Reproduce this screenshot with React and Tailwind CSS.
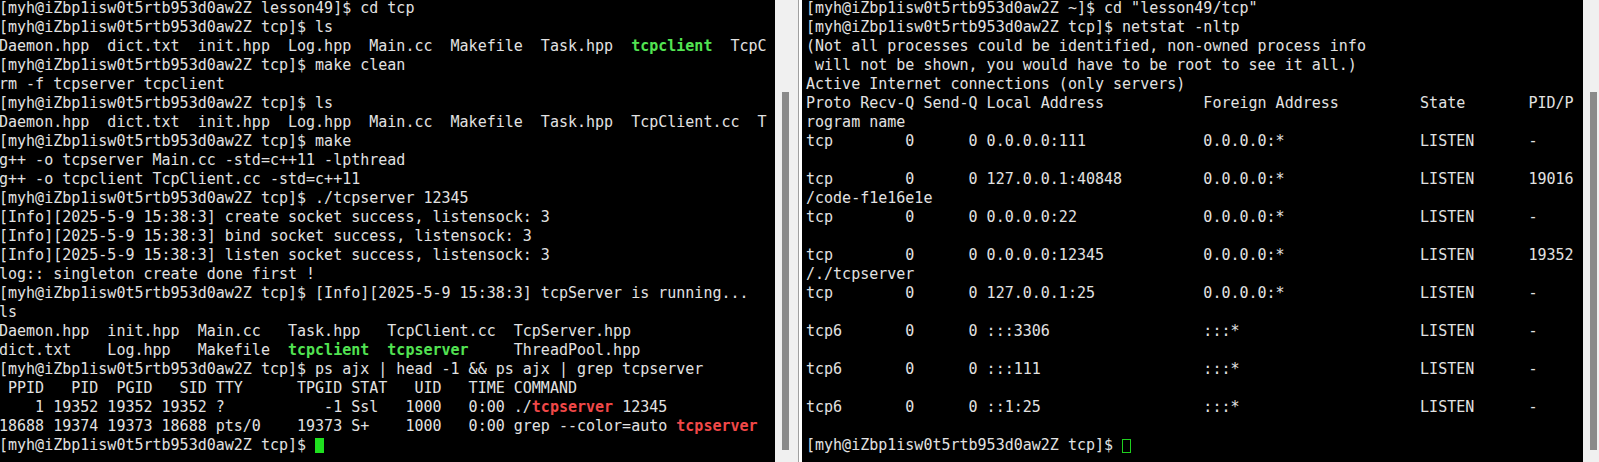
const PROMPT = '[myh@iZbp1isw0t5rtb953d0aw2Z tcp]$ ';

function G({ children }) {
  return <span className="font-bold text-[#52e352]">{children}</span>;
}

function R({ children }) {
  return <span className="font-bold text-[#f04848]">{children}</span>;
}

const leftLines = [
  '[myh@iZbp1isw0t5rtb953d0aw2Z lesson49]$ cd tcp',
  PROMPT + 'ls',
  <>Daemon.hpp  dict.txt  init.hpp  Log.hpp  Main.cc  Makefile  Task.hpp  <G>tcpclient</G>  TcpC</>,
  PROMPT + 'make clean',
  'rm -f tcpserver tcpclient',
  PROMPT + 'ls',
  'Daemon.hpp  dict.txt  init.hpp  Log.hpp  Main.cc  Makefile  Task.hpp  TcpClient.cc  T',
  PROMPT + 'make',
  'g++ -o tcpserver Main.cc -std=c++11 -lpthread',
  'g++ -o tcpclient TcpClient.cc -std=c++11',
  PROMPT + './tcpserver 12345',
  '[Info][2025-5-9 15:38:3] create socket success, listensock: 3',
  '[Info][2025-5-9 15:38:3] bind socket success, listensock: 3',
  '[Info][2025-5-9 15:38:3] listen socket success, listensock: 3',
  'log:: singleton create done first !',
  PROMPT + '[Info][2025-5-9 15:38:3] tcpServer is running...',
  'ls',
  'Daemon.hpp  init.hpp  Main.cc   Task.hpp   TcpClient.cc  TcpServer.hpp',
  <>dict.txt    Log.hpp   Makefile  <G>tcpclient</G>  <G>tcpserver</G>     ThreadPool.hpp</>,
  PROMPT + 'ps ajx | head -1 && ps ajx | grep tcpserver',
  ' PPID   PID  PGID   SID TTY      TPGID STAT   UID   TIME COMMAND',
  <>    1 19352 19352 19352 ?           -1 Ssl   1000   0:00 ./<R>tcpserver</R> 12345</>,
  <>18688 19374 19373 18688 pts/0    19373 S+    1000   0:00 grep --color=auto <R>tcpserver</R></>,
  <>{PROMPT}<span className="inline-block w-[9px] h-[15px] align-[-3px] bg-[#1fe01f]"></span></>,
];

const rightLines = [
  '[myh@iZbp1isw0t5rtb953d0aw2Z ~]$ cd "lesson49/tcp"',
  PROMPT + 'netstat -nltp',
  '(Not all processes could be identified, non-owned process info',
  ' will not be shown, you would have to be root to see it all.)',
  'Active Internet connections (only servers)',
  'Proto Recv-Q Send-Q Local Address           Foreign Address         State       PID/P',
  'rogram name',
  'tcp        0      0 0.0.0.0:111             0.0.0.0:*               LISTEN      -',
  '',
  'tcp        0      0 127.0.0.1:40848         0.0.0.0:*               LISTEN      19016',
  '/code-f1e16e1e',
  'tcp        0      0 0.0.0.0:22              0.0.0.0:*               LISTEN      -',
  '',
  'tcp        0      0 0.0.0.0:12345           0.0.0.0:*               LISTEN      19352',
  '/./tcpserver',
  'tcp        0      0 127.0.0.1:25            0.0.0.0:*               LISTEN      -',
  '',
  'tcp6       0      0 :::3306                 :::*                    LISTEN      -',
  '',
  'tcp6       0      0 :::111                  :::*                    LISTEN      -',
  '',
  'tcp6       0      0 ::1:25                  :::*                    LISTEN      -',
  '',
  <>{PROMPT}<span className="inline-block w-[9px] h-[14px] align-[-3px] border border-[#1fd01f]"></span></>,
];

function Terminal({ lines }) {
  return (
    <div className="mt-[-1px] font-['DejaVu_Sans_Mono',monospace] text-[15px] leading-[19px] text-[#e2e2e2] whitespace-pre">
      {lines.map((line, i) => (
        <div key={i} className="h-[19px]">{line}</div>
      ))}
    </div>
  );
}

function Scrollbar({ width }) {
  return (
    <div className={`${width} h-full shrink-0 bg-[#f0f0f0] pl-[7px] pt-[92px] pb-[12px]`}>
      <div className="w-[7px] h-full bg-[#8a8a8a]"></div>
    </div>
  );
}

export default function App() {
  return (
    <div className="flex w-[1599px] h-[462px] bg-[#f0f0f0] overflow-hidden">
      <div className="w-[776px] h-full shrink-0 bg-black overflow-hidden pl-0 ml-[-1px]">
        <Terminal lines={leftLines} />
      </div>
      <Scrollbar width="w-[23px]" />
      <div className="w-px h-full shrink-0 bg-[#a0a0a0]"></div>
      <div className="w-[3px] h-full shrink-0 bg-white"></div>
      <div className="w-[781px] h-full shrink-0 bg-black overflow-hidden pl-[4px]">
        <Terminal lines={rightLines} />
      </div>
      <Scrollbar width="w-[16px]" />
    </div>
  );
}
